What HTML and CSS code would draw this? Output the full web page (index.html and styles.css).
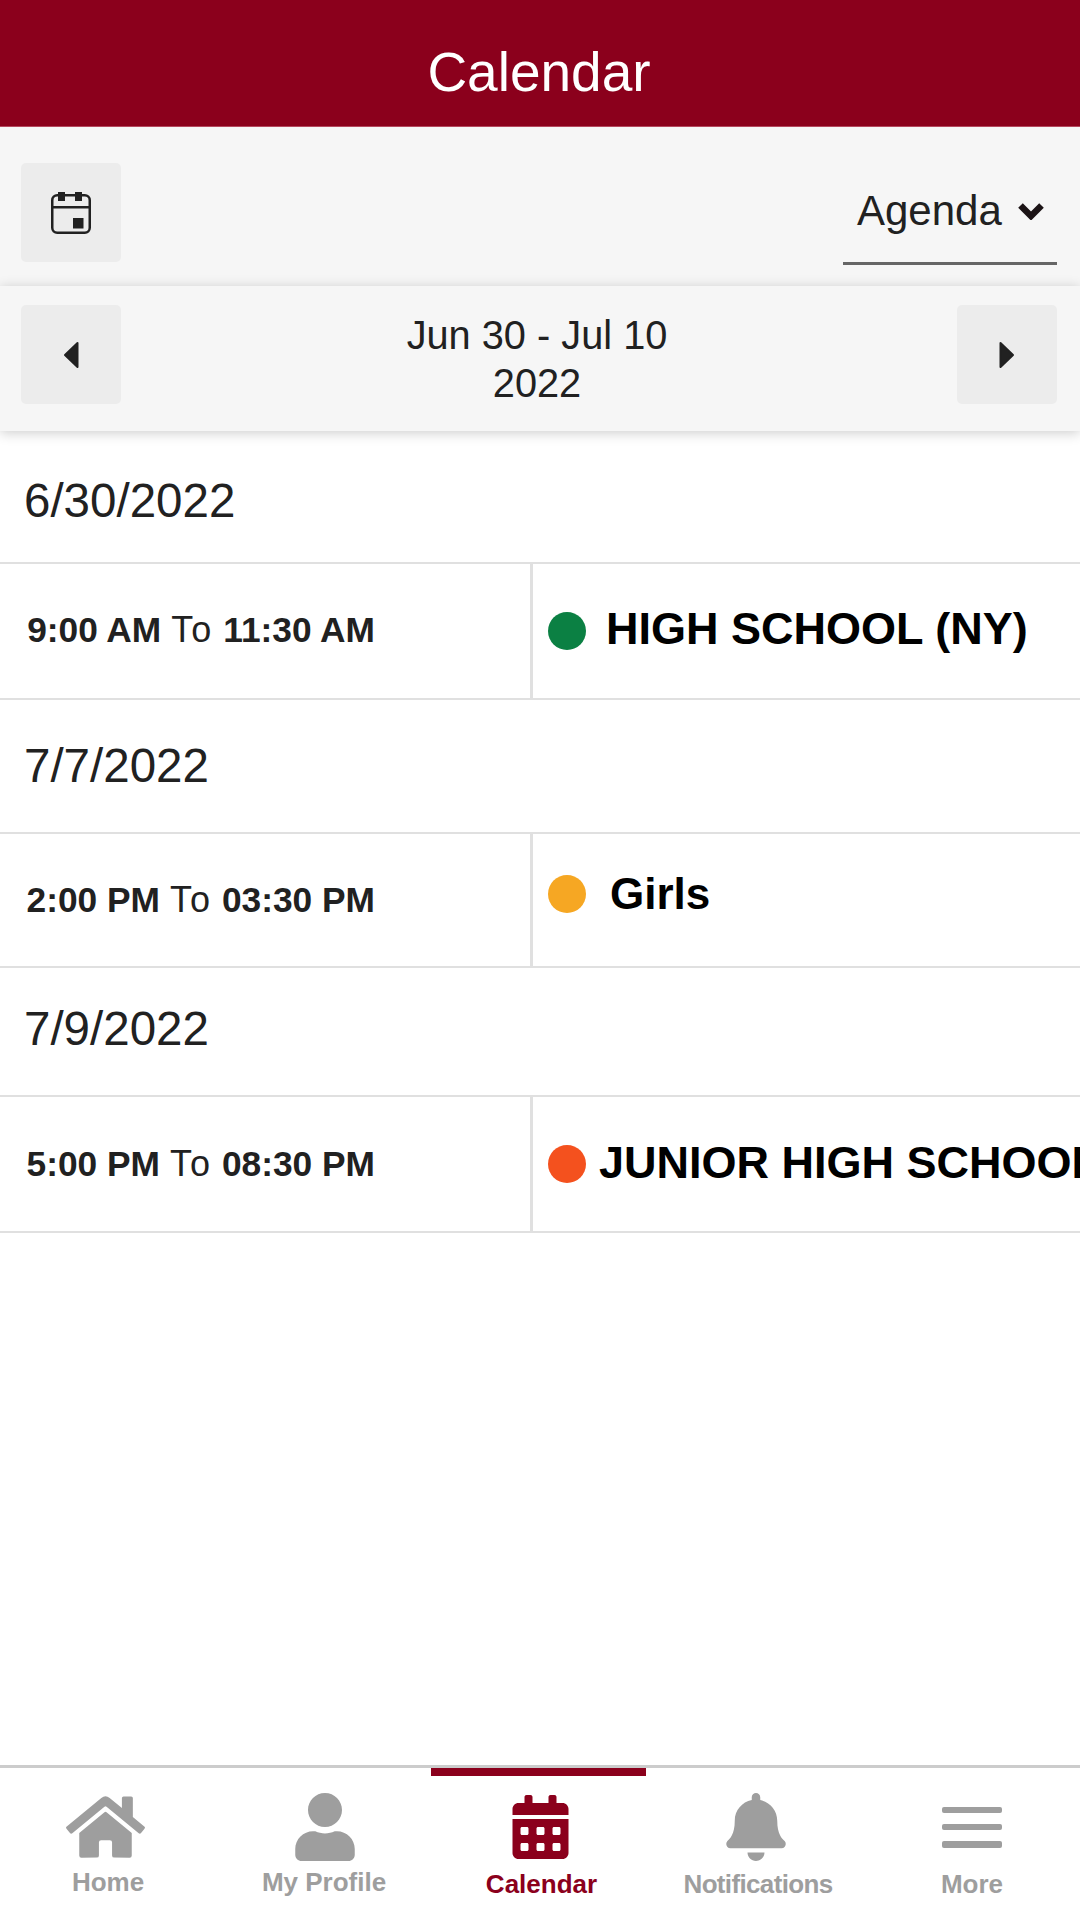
FILE: index.html
```html
<!DOCTYPE html>
<html lang="en">
<head>
<meta charset="utf-8">
<title>Calendar</title>
<link rel="stylesheet" href="styles.css">
</head>
<body>
<header class="app-header"><h1 class="app-title">Calendar</h1></header>

<section class="toolbar">
  <button class="icon-btn" aria-label="Pick date">
    <svg class="ico-event" viewBox="0 0 40 42"><rect x="1.25" y="3.25" width="37.5" height="37.5" rx="5" fill="none" stroke="#212121" stroke-width="2.5"/><rect x="1" y="14" width="38" height="2.5" fill="#212121"/><rect x="7" y="0" width="7" height="9" fill="#212121"/><rect x="24" y="0" width="7" height="9" fill="#212121"/><rect x="22" y="26" width="10.5" height="10.5" fill="#212121"/></svg>
  </button>
  <div class="view-select">
    <span class="view-label">Agenda</span>
    <svg class="ico-chevron" viewBox="0 0 28 18"><path d="M3.5 3.5 14 14 24.5 3.5" fill="none" stroke="#1c1416" stroke-width="6.5"/></svg>
  </div>
</section>

<section class="range-bar">
  <button class="icon-btn" aria-label="Previous">
    <svg class="ico-caret" viewBox="0 0 16 28"><path d="M14.5 2 2 14 14.5 26Z" fill="#212121" stroke="#212121" stroke-width="2" stroke-linejoin="round"/></svg>
  </button>
  <div class="range-text">Jun 30 - Jul 10<br>2022</div>
  <button class="icon-btn" aria-label="Next">
    <svg class="ico-caret" viewBox="0 0 16 28"><path d="M1.5 2 14 14 1.5 26Z" fill="#212121" stroke="#212121" stroke-width="2" stroke-linejoin="round"/></svg>
  </button>
</section>

<main class="agenda">
  <div class="date-row date-a">6/30/2022</div>
  <div class="event-row">
    <div class="time-cell time-cell-up"><b>9:00 AM</b> <span class="time-to">To</span> <b>11:30 AM</b></div>
    <div class="event-cell">
      <span class="dot dot-green"></span>
      <span class="event-name name-a">HIGH SCHOOL (NY)</span>
    </div>
  </div>

  <div class="date-row date-b">7/7/2022</div>
  <div class="event-row event-row-b">
    <div class="time-cell"><b>2:00 PM</b> <span class="time-to">To</span> <b>03:30 PM</b></div>
    <div class="event-cell event-cell-up">
      <span class="dot dot-yellow"></span>
      <span class="event-name name-b">Girls</span>
    </div>
  </div>

  <div class="date-row date-c">7/9/2022</div>
  <div class="event-row">
    <div class="time-cell"><b>5:00 PM</b> <span class="time-to">To</span> <b>08:30 PM</b></div>
    <div class="event-cell">
      <span class="dot dot-orange"></span>
      <span class="event-name name-c">JUNIOR HIGH SCHOOL</span>
    </div>
  </div>
</main>

<nav class="tabbar">
  <a class="tab">
    <span class="tab-icon icon-home"><svg class="ico-home" viewBox="0 0 576 512"><path d="M280.37 148.26L96 300.11V464a16 16 0 0 0 16 16l112.06-.29a16 16 0 0 0 15.92-16V368a16 16 0 0 1 16-16h64a16 16 0 0 1 16 16v95.64a16 16 0 0 0 16 16.05L464 480a16 16 0 0 0 16-16V300L295.67 148.26a12.19 12.19 0 0 0-15.3 0zM571.6 251.47L488 182.56V44.05a12 12 0 0 0-12-12h-56a12 12 0 0 0-12 12v72.61L318.47 43a48 48 0 0 0-61 0L4.34 251.47a12 12 0 0 0-1.6 16.9l25.5 31A12 12 0 0 0 45.15 301l235.22-193.74a12.19 12.19 0 0 1 15.3 0L530.9 301a12 12 0 0 0 16.9-1.6l25.5-31a12 12 0 0 0-1.7-16.93z"/></svg></span>
    <span class="tab-label">Home</span>
  </a>
  <a class="tab">
    <span class="tab-icon icon-user"><svg class="ico-user" viewBox="0 0 448 512"><path d="M224 256c70.7 0 128-57.3 128-128S294.7 0 224 0 96 57.3 96 128s57.3 128 128 128zm89.6 32h-16.7c-22.2 10.2-46.9 16-72.9 16s-50.6-5.8-72.9-16h-16.7C60.2 288 0 348.2 0 422.4V464c0 26.5 21.5 48 48 48h352c26.5 0 48-21.5 48-48v-41.6c0-74.2-60.2-134.4-134.4-134.4z"/></svg></span>
    <span class="tab-label">My Profile</span>
  </a>
  <a class="tab tab-active">
    <span class="tab-icon"><svg class="ico-cal" viewBox="0 0 448 512"><path d="M0 464c0 26.5 21.5 48 48 48h352c26.5 0 48-21.5 48-48V192H0v272zm320-196c0-6.6 5.4-12 12-12h40c6.6 0 12 5.4 12 12v40c0 6.6-5.4 12-12 12h-40c-6.6 0-12-5.4-12-12v-40zm0 128c0-6.6 5.4-12 12-12h40c6.6 0 12 5.4 12 12v40c0 6.6-5.4 12-12 12h-40c-6.6 0-12-5.4-12-12v-40zM192 268c0-6.6 5.4-12 12-12h40c6.6 0 12 5.4 12 12v40c0 6.6-5.4 12-12 12h-40c-6.6 0-12-5.4-12-12v-40zm0 128c0-6.6 5.4-12 12-12h40c6.6 0 12 5.4 12 12v40c0 6.6-5.4 12-12 12h-40c-6.6 0-12-5.4-12-12v-40zM64 268c0-6.6 5.4-12 12-12h40c6.6 0 12 5.4 12 12v40c0 6.6-5.4 12-12 12H76c-6.6 0-12-5.4-12-12v-40zm0 128c0-6.6 5.4-12 12-12h40c6.6 0 12 5.4 12 12v40c0 6.6-5.4 12-12 12H76c-6.6 0-12-5.4-12-12v-40zM400 64h-48V16c0-8.8-7.2-16-16-16h-32c-8.8 0-16 7.2-16 16v48H160V16c0-8.8-7.2-16-16-16h-32c-8.8 0-16 7.2-16 16v48H48C21.5 64 0 85.5 0 112v48h448v-48c0-26.5-21.5-48-48-48z"/></svg></span>
    <span class="tab-label tab-label-low label-calendar">Calendar</span>
  </a>
  <a class="tab">
    <span class="tab-icon"><svg class="ico-bell" viewBox="0 0 448 512"><path d="M224 512c35.32 0 63.97-28.65 63.97-64H160.03c0 35.35 28.65 64 63.97 64zm215.39-149.71c-19.32-20.76-55.47-51.99-55.47-154.29 0-77.7-54.48-139.9-127.94-155.16V32c0-17.67-14.32-32-31.98-32s-31.98 14.33-31.98 32v20.84C118.56 68.1 64.08 130.3 64.08 208c0 102.3-36.15 133.53-55.47 154.29-6 6.45-8.66 14.16-8.61 21.71.11 16.4 12.98 32 32.1 32h383.8c19.12 0 32-15.6 32.1-32 .05-7.55-2.61-15.27-8.61-21.71z"/></svg></span>
    <span class="tab-label tab-label-low label-notif">Notifications</span>
  </a>
  <a class="tab">
    <span class="tab-icon"><span class="ico-bars"><i></i><i></i><i></i></span></span>
    <span class="tab-label tab-label-low">More</span>
  </a>
</nav>
</body>
</html>
```

FILE: styles.css
```css
* { box-sizing: border-box; }
html, body { margin: 0; padding: 0; }
body {
  width: 1080px;
  height: 1920px;
  overflow: hidden;
  display: flex;
  flex-direction: column;
  background: #fff;
  color: #212121;
  font-family: "Liberation Sans", Arial, sans-serif;
}

.app-header {
  height: 127px;
  flex: none;
  padding: 40px 2px 0 0;
  background: #8b001c;
  border-bottom: 1px solid #b5485e;
}
.app-title {
  margin: 0;
  color: #fff;
  font-size: 55px;
  font-weight: 400;
  line-height: 64px;
  text-align: center;
}

.icon-btn {
  width: 100px;
  height: 99px;
  flex: none;
  display: flex;
  align-items: center;
  justify-content: center;
  padding: 0;
  border: 0;
  border-radius: 5px;
  background: #ececec;
}

.toolbar {
  height: 159px;
  flex: none;
  display: flex;
  align-items: flex-start;
  justify-content: space-between;
  padding: 36px 23px 0 21px;
  background: #f6f6f6;
}
.ico-event { width: 40px; height: 42px; display: block; }
.view-select {
  width: 214px;
  height: 102px;
  display: flex;
  align-items: flex-start;
  padding: 24px 0 0 14px;
  border-bottom: 3px solid #666;
}
.view-label { font-size: 42px; line-height: 48px; }
.ico-chevron { width: 28px; height: 18px; margin: 15px 0 0 15px; display: block; }

.range-bar {
  height: 145px;
  flex: none;
  position: relative;
  z-index: 1;
  display: flex;
  align-items: flex-start;
  padding: 19px 23px 0 21px;
  background: #f6f6f6;
  box-shadow: 0 2px 12px rgba(0, 0, 0, .2);
}
.ico-caret { width: 16px; height: 28px; display: block; }
.range-text {
  flex: 1;
  margin: 6px 4px 0 0;
  font-size: 39.75px;
  line-height: 48px;
  text-align: center;
}

.agenda { flex: 1; background: #fff; }
.date-row {
  border-bottom: 2px solid #e0e0e0;
  padding-left: 24px;
  font-size: 47.5px;
  line-height: 56px;
}
.date-a { height: 133px; padding-top: 42px; }
.date-b { height: 134px; padding-top: 38px; }
.date-c { height: 129px; padding-top: 33px; }

.event-row {
  height: 136px;
  display: flex;
  border-bottom: 2px solid #e0e0e0;
}
.event-row-b { height: 134px; }
.time-cell {
  width: 533px;
  flex: none;
  display: flex;
  align-items: center;
  justify-content: flex-end;
  gap: 10px;
  padding-right: 155px;
  border-right: 3px solid #e0e0e0;
  font-size: 35.3px;
  white-space: nowrap;
}
.time-cell-up { padding-bottom: 2px; }
.time-cell b { font-weight: 700; }
.time-to { font-size: 36px; letter-spacing: 2px; }
.event-cell {
  flex: 1;
  min-width: 0;
  display: flex;
  align-items: center;
  padding-left: 15px;
  overflow: hidden;
}
.event-cell-up { padding-bottom: 12px; }
.dot { width: 38px; height: 38px; flex: none; border-radius: 50%; }
.dot-green { background: #0b8043; }
.dot-yellow { background: #f6a723; }
.dot-orange { background: #f4511e; }
.event-name {
  color: #000;
  font-size: 45px;
  font-weight: 700;
  line-height: 52px;
  white-space: nowrap;
}
.name-a { margin: -4px 0 0 20px; }
.name-b { margin: -1px 0 0 24px; font-size: 44px; }
.name-c { margin: -2px 0 0 13px; }

.tabbar {
  height: 155px;
  flex: none;
  display: grid;
  grid-template-columns: repeat(5, 216px);
  border-top: 3px solid #ccc;
  background: #fff;
}
.tab {
  position: relative;
  display: flex;
  flex-direction: column;
  align-items: center;
  padding-top: 25px;
  color: #9e9e9e;
}
.tab svg { fill: currentColor; display: block; }
.tab-active { color: #8b001c; }
.tab-active::before {
  content: "";
  position: absolute;
  top: 0;
  left: -1px;
  width: 215px;
  height: 8px;
  background: #8b001c;
}
.tab-icon {
  height: 68px;
  display: flex;
  align-items: center;
  justify-content: center;
}
.icon-home { margin-right: 5px; }
.icon-user { margin-left: 2px; }
.ico-home { width: 79px; height: 70px; }
.ico-user { width: 60px; height: 68px; }
.ico-cal { width: 57px; height: 64px; }
.ico-bell { width: 60px; height: 68px; }
.ico-bars {
  width: 60px;
  height: 41px;
  display: flex;
  flex-direction: column;
  justify-content: space-between;
}
.ico-bars i { height: 6.5px; border-radius: 2px; background: currentColor; }
.tab-label {
  margin-top: 6px;
  font-size: 26px;
  font-weight: 700;
  line-height: 30px;
  white-space: nowrap;
}
.tab-label-low { margin-top: 8px; }
.label-calendar { margin-left: 3px; }
.label-notif { margin-left: 4px; letter-spacing: -.65px; }
```
